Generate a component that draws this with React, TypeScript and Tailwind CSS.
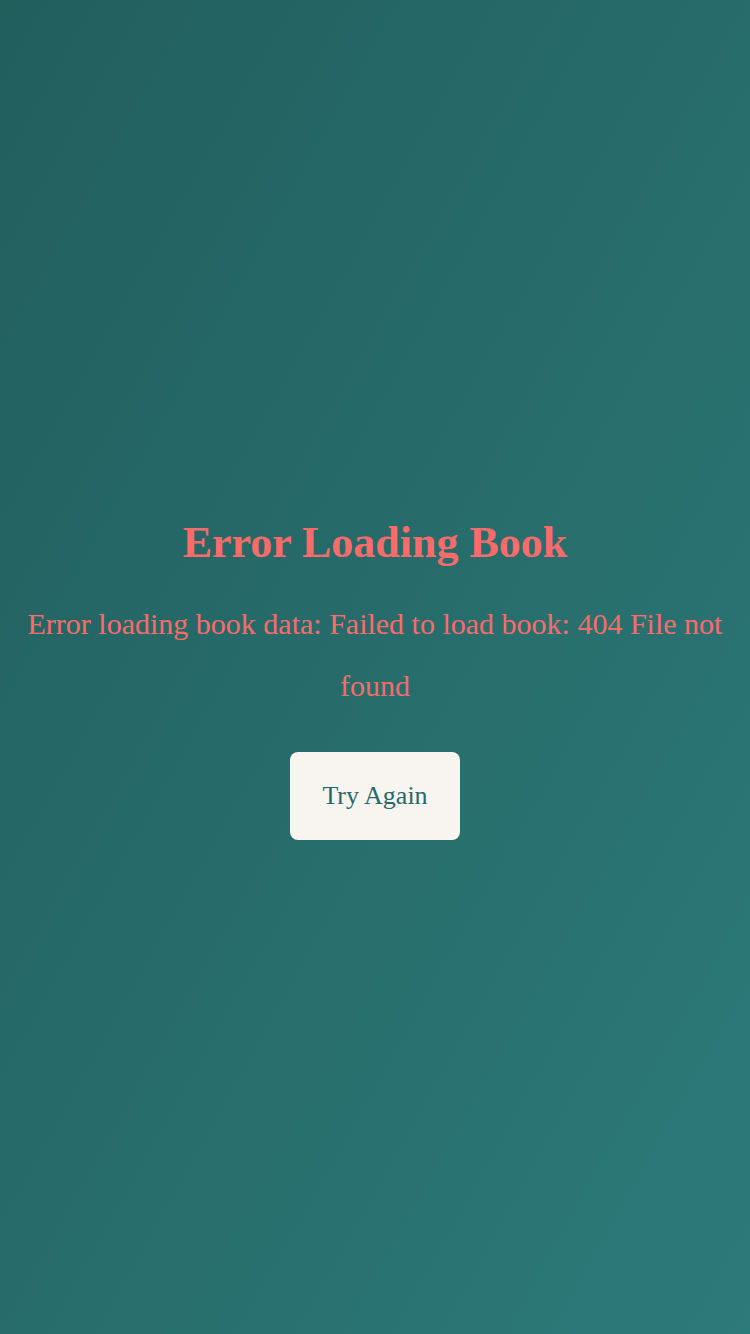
export default function App() {
  const reload = () => window.location.reload();

  return (
    <div
      className="min-h-screen w-full flex flex-col items-center justify-center px-5 pt-[24px] text-center bg-gradient-to-br from-[#215f5d] to-[#2d7a7a]"
      style={{ fontFamily: '"Liberation Serif", "Times New Roman", serif' }}
    >
      <h1 className="text-[44px] font-bold text-[#ff6b6b] leading-[1.15]">
        Error Loading Book
      </h1>
      <p className="mt-[25px] text-[30px] leading-[62px] text-[#ff6b6b]">
        Error loading book data: Failed to load book: 404 File not found
      </p>
      <button
        onClick={reload}
        className="mt-[35px] rounded-lg bg-[#f8f5f0] px-8 py-[29px] text-[26px] leading-[30px] text-[#2a6868]"
      >
        Try Again
      </button>
    </div>
  );
}
